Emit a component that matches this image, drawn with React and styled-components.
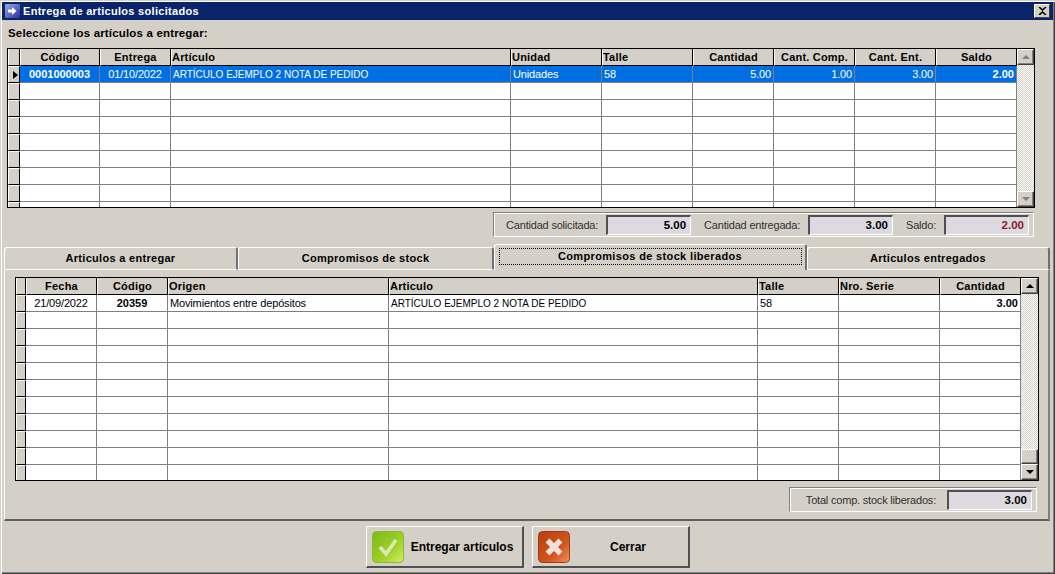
import React from "react";
import styled, { createGlobalStyle } from "styled-components";

const topCols = "12px 80px 71px 340px 91px 91px 81px 81px 81px 81px";
const bottomCols = "10px 71px 71px 221px 369px 81px 101px 81px";

const topHeaders = [
    { text: "Código" },
    { text: "Entrega" },
    { text: "Artículo", left: true },
    { text: "Unidad", left: true },
    { text: "Talle", left: true },
    { text: "Cantidad" },
    { text: "Cant. Comp." },
    { text: "Cant. Ent." },
    { text: "Saldo" },
];

const topRow = [
    { text: "0001000003", align: "center", bold: true },
    { text: "01/10/2022", align: "center" },
    { text: "ARTÍCULO EJEMPLO 2 NOTA DE PEDIDO", caps: true },
    { text: "Unidades" },
    { text: "58" },
    { text: "5.00", align: "right" },
    { text: "1.00", align: "right" },
    { text: "3.00", align: "right" },
    { text: "2.00", align: "right", bold: true },
];

const bottomHeaders = [
    { text: "Fecha" },
    { text: "Código" },
    { text: "Origen", left: true },
    { text: "Articulo", left: true },
    { text: "Talle", left: true },
    { text: "Nro. Serie", left: true },
    { text: "Cantidad" },
];

const bottomRow = [
    { text: "21/09/2022", align: "center" },
    { text: "20359", align: "center", bold: true },
    { text: "Movimientos entre depósitos" },
    { text: "ARTÍCULO EJEMPLO 2 NOTA DE PEDIDO", caps: true },
    { text: "58" },
    { text: "" },
    { text: "3.00", align: "right", bold: true },
];

const tabs = [
    { label: "Articulos a entregar", width: 234 },
    { label: "Compromisos de stock", width: 256 },
    { label: "Compromisos de stock liberados", width: 313, active: true },
    { label: "Articulos entregados", width: 243 },
];

function DataGrid({ cols, headers, firstRow, rowCount, selected, width, height, scrollDisabled }) {
    const blanks = Array.from({ length: rowCount - 1 });
    return (
        <GridFrame $width={width} $height={height}>
            <GridBody>
                <GridRow $cols={cols}>
                    <HeaderCell />
                    {headers.map((h) => (
                        <HeaderCell key={h.text} $left={h.left}>{h.text}</HeaderCell>
                    ))}
                </GridRow>
                <GridRow $cols={cols}>
                    <IndicatorCell>{selected && <RowPointer />}</IndicatorCell>
                    {firstRow.map((c, i) => (
                        <Cell key={i} $align={c.align} $bold={c.bold} $caps={c.caps} $selected={selected}>{c.text}</Cell>
                    ))}
                </GridRow>
                {blanks.map((_, i) => (
                    <GridRow $cols={cols} key={i}>
                        <IndicatorCell />
                        {firstRow.map((c, j) => <Cell key={j} />)}
                    </GridRow>
                ))}
            </GridBody>
            <ScrollBar>
                <ScrollButton><ArrowUp $disabled={scrollDisabled} /></ScrollButton>
                <ScrollTrack />
                {!scrollDisabled && <ScrollThumb />}
                <ScrollButton><ArrowDown $disabled={scrollDisabled} /></ScrollButton>
            </ScrollBar>
        </GridFrame>
    );
}

function App() {
    return (
        <Window>
            <GlobalStyle />
            <TitleBar>
                <TitleIcon viewBox="0 0 15 14">
                    <defs>
                        <linearGradient id="ti" x1="0" y1="0" x2="1" y2="1">
                            <stop offset="0" stopColor="#9aa8e8" />
                            <stop offset="1" stopColor="#2a2f9c" />
                        </linearGradient>
                    </defs>
                    <rect width="15" height="14" rx="1" fill="url(#ti)" />
                    <path d="M3 5.5h4V3l4.5 4L7 11V8.500H3z" fill="#fff" />
                </TitleIcon>
                <TitleText>Entrega de articulos solicitados</TitleText>
                <CloseButton>
                    <svg width="9" height="8" viewBox="0 0 9 8">
                        <path d="M1 0l3.500 3L8 0M1 8l3.500-3L8 8" fill="none" stroke="#000" strokeWidth="1.6" />
                    </svg>
                </CloseButton>
            </TitleBar>

            <TopSection>
                <SectionLabel>Seleccione los artículos a entregar:</SectionLabel>
                <DataGrid
                    cols={topCols}
                    headers={topHeaders}
                    firstRow={topRow}
                    rowCount={9}
                    width={1028}
                    height={160}
                    selected
                    scrollDisabled
                />
                <SummaryBox $width={541} $right={21} $top={4}>
                    <SummaryLabel $after={8}>Cantidad solicitada:</SummaryLabel>
                    <SummaryField>5.00</SummaryField>
                    <SummaryLabel $before={13} $after={8}>Cantidad entregada:</SummaryLabel>
                    <SummaryField>3.00</SummaryField>
                    <SummaryLabel $before={13} $after={8}>Saldo:</SummaryLabel>
                    <SummaryField $red>2.00</SummaryField>
                </SummaryBox>
            </TopSection>

            <TabStrip>
                {tabs.map((t) => (
                    <Tab key={t.label} $width={t.width} $active={t.active}>
                        {t.active ? <TabFocus>{t.label}</TabFocus> : t.label}
                    </Tab>
                ))}
            </TabStrip>

            <TabPanel>
                <DataGrid
                    cols={bottomCols}
                    headers={bottomHeaders}
                    firstRow={bottomRow}
                    rowCount={11}
                    width={1024}
                    height={204}
                />
                <SummaryBox $width={248} $right={11} $top={6}>
                    <SummaryLabel $after={11}>Total comp. stock liberados:</SummaryLabel>
                    <SummaryField>3.00</SummaryField>
                </SummaryBox>
            </TabPanel>

            <Footer>
                <ActionButton>
                    <ButtonIcon viewBox="0 0 32 32">
                        <defs>
                            <linearGradient id="ok" x1="0" y1="0" x2="1" y2="1">
                                <stop offset="0" stopColor="#7fb81a" />
                                <stop offset="0.55" stopColor="#9ad024" />
                                <stop offset="1" stopColor="#d4ec62" />
                            </linearGradient>
                        </defs>
                        <rect x="0.5" y="0.5" width="31" height="31" rx="4" fill="url(#ok)" stroke="#8ab83a" />
                        <path d="M8 16l6 7 10-14" fill="none" stroke="#dbe8bd" strokeWidth="3.500" />
                    </ButtonIcon>
                    <ButtonLabel>Entregar artículos</ButtonLabel>
                </ActionButton>
                <ActionButton>
                    <ButtonIcon viewBox="0 0 32 32">
                        <defs>
                            <linearGradient id="no" x1="0" y1="0" x2="1" y2="1">
                                <stop offset="0" stopColor="#b8400f" />
                                <stop offset="0.6" stopColor="#d0541c" />
                                <stop offset="1" stopColor="#f0905a" />
                            </linearGradient>
                        </defs>
                        <rect x="0.5" y="0.5" width="31" height="31" rx="4" fill="url(#no)" stroke="#a03c10" />
                        <path d="M9.500 9.500l13 13M22.500 9.500l-13 13" fill="none" stroke="#f0e2da" strokeWidth="5.500" />
                    </ButtonIcon>
                    <ButtonLabel>Cerrar</ButtonLabel>
                </ActionButton>
            </Footer>
        </Window>
    );
}

export default App;

const GlobalStyle = createGlobalStyle`
    html, body {
        margin: 0;
        padding: 0;
        overflow: hidden;
    }
    * {
        box-sizing: border-box;
    }
`;

const Window = styled.div`
    width: 1055px;
    height: 574px;
    padding-top: 2px;
    background-color: #d4d0c8;
    color: #000;
    font-family: "Liberation Sans", Arial, sans-serif;
    font-size: 11px;
    display: flex;
    flex-direction: column;
    overflow: hidden;
    box-shadow: inset 1px 1px 0 #d4d0c8, inset 2px 2px 0 #fff, inset -1px -1px 0 #404040, inset -2px -2px 0 #808080;
`;

const TitleBar = styled.div`
    height: 18px;
    margin: 0 2px;
    padding: 0 3px;
    background-color: #0a246a;
    display: flex;
    align-items: center;
    flex-shrink: 0;
`;

const TitleIcon = styled.svg`
    width: 15px;
    height: 14px;
    margin-right: 3px;
`;

const TitleText = styled.span`
    flex: 1;
    color: white;
    font-weight: bold;
    letter-spacing: 0.3px;
`;

const CloseButton = styled.div`
    width: 16px;
    height: 14px;
    background-color: #d4d0c8;
    display: flex;
    align-items: center;
    justify-content: center;
    border: 1px solid;
    border-color: #fff #404040 #404040 #fff;
`;

const TopSection = styled.div`
    padding-left: 7px;
    flex-shrink: 0;
    display: flex;
    flex-direction: column;
`;

const SectionLabel = styled.div`
    height: 28px;
    padding: 7px 0 0 1px;
    font-weight: bold;
    font-size: 11.500px;
    line-height: 13px;
    letter-spacing: 0.17px;
`;

const GridFrame = styled.div`
    width: ${(p) => p.$width}px;
    height: ${(p) => p.$height}px;
    flex-shrink: 0;
    border: 1px solid #000;
    background-color: white;
    display: flex;
    overflow: hidden;
`;

const GridBody = styled.div`
    flex: 1;
    overflow: hidden;
`;

const GridRow = styled.div`
    display: grid;
    grid-template-columns: ${(p) => p.$cols};
    height: 17px;
`;

const HeaderCell = styled.div`
    background-color: #d4d0c8;
    border-right: 1px solid #000;
    border-bottom: 1px solid #000;
    border-left: 1px solid #fff;
    font-weight: bold;
    line-height: 17px;
    text-align: ${(p) => (p.$left ? "left" : "center")};
    white-space: nowrap;
    overflow: hidden;
    letter-spacing: 0.2px;
`;

const IndicatorCell = styled.div`
    background-color: #d4d0c8;
    border-right: 1px solid #000;
    border-bottom: 1px solid #000;
    border-top: 1px solid #fff;
    border-left: 1px solid #fff;
    display: flex;
    align-items: center;
    justify-content: flex-end;
`;

const RowPointer = styled.span`
    width: 0;
    height: 0;
    margin-right: 1px;
    border-style: solid;
    border-width: 4px 0 4px 5px;
    border-color: transparent transparent transparent #000;
`;

const Cell = styled.div`
    padding: 0 2px;
    border-right: 1px solid #808080;
    border-bottom: 1px solid #808080;
    background-color: ${(p) => (p.$selected ? "#006fe3" : "#fff")};
    color: ${(p) => (p.$selected ? "#fff" : "#000")};
    font-weight: ${(p) => (p.$bold ? "bold" : "normal")};
    font-size: ${(p) => (p.$caps ? "10px" : "11px")};
    text-align: ${(p) => p.$align || "left"};
    letter-spacing: ${(p) => (p.$caps || p.$bold ? "0" : "-0.15px")};
    line-height: ${(p) => (p.$caps ? "18px" : "16px")};
    white-space: nowrap;
    overflow: hidden;
`;

const ScrollBar = styled.div`
    width: 17px;
    flex-shrink: 0;
    display: flex;
    flex-direction: column;
`;

const ScrollTrack = styled.div`
    flex: 1;
    background: repeating-conic-gradient(#d4d0c8 0 25%, #fff 0 50%) 0 0 / 2px 2px;
`;

const ScrollThumb = styled.div`
    height: 15px;
    flex-shrink: 0;
    background-color: #d4d0c8;
    border: 1px solid;
    border-color: #fff #404040 #404040 #fff;
    box-shadow: inset -1px -1px 0 #808080;
`;

const ScrollButton = styled.div`
    height: 16px;
    flex-shrink: 0;
    background-color: #d4d0c8;
    border: 1px solid;
    border-color: #fff #404040 #404040 #fff;
    box-shadow: inset -1px -1px 0 #808080;
    display: flex;
    align-items: center;
    justify-content: center;
`;

const ArrowUp = styled.span`
    width: 0;
    height: 0;
    border-style: solid;
    border-width: 0 4px 4px 4px;
    border-color: transparent transparent ${(p) => (p.$disabled ? "#808080" : "#000")} transparent;
`;

const ArrowDown = styled.span`
    width: 0;
    height: 0;
    border-style: solid;
    border-width: 4px 4px 0 4px;
    border-color: ${(p) => (p.$disabled ? "#808080" : "#000")} transparent transparent transparent;
`;

const SummaryBox = styled.div`
    align-self: flex-end;
    width: ${(p) => p.$width}px;
    height: 25px;
    margin: ${(p) => p.$top}px ${(p) => p.$right}px 0 auto;
    padding: 0 4px 0 0;
    display: flex;
    align-items: center;
    justify-content: flex-end;
    border: 1px solid;
    border-color: #808080 #fff #fff #808080;
    box-shadow: inset 1px 1px 0 #fff;
`;

const SummaryLabel = styled.span`
    margin-left: ${(p) => p.$before || 0}px;
    margin-right: ${(p) => p.$after || 0}px;
    color: #303030;
    letter-spacing: -0.2px;
    white-space: nowrap;
`;

const SummaryField = styled.div`
    width: 85px;
    height: 20px;
    flex-shrink: 0;
    padding-right: 4px;
    background-color: #dcdae0;
    border-style: solid;
    border-color: #505050 #fff #fff #505050;
    border-width: 2px 1px 1px 2px;
    color: ${(p) => (p.$red ? "#8b2020" : "#000")};
    font-weight: bold;
    font-size: 11.500px;
    line-height: 17px;
    text-align: right;
`;

const TabStrip = styled.div`
    height: 26px;
    margin: 7px 0 0 4px;
    display: flex;
    align-items: flex-end;
    flex-shrink: 0;
`;

const Tab = styled.div`
    width: ${(p) => p.$width}px;
    height: ${(p) => (p.$active ? "26px" : "23px")};
    padding: ${(p) => (p.$active ? "3px 0 0" : "0 0 2px")};
    display: flex;
    align-items: ${(p) => (p.$active ? "flex-start" : "center")};
    justify-content: center;
    font-weight: bold;
    letter-spacing: 0.3px;
    background-color: #d4d0c8;
    border-top: 1px solid #fff;
    border-left: 1px solid #fff;
    border-right: 2px solid #707070;
    border-bottom: ${(p) => (p.$active ? "none" : "1px solid #fff")};
    border-top-left-radius: 3px;
    border-top-right-radius: 3px;
`;

const TabFocus = styled.div`
    width: 303px;
    height: 17px;
    line-height: 15px;
    text-align: center;
    letter-spacing: 0.35px;
    border: 1px dotted #000;
`;

const TabPanel = styled.div`
    width: 1046px;
    height: 251px;
    margin-left: 4px;
    padding: 7px 0 0 10px;
    flex-shrink: 0;
    display: flex;
    flex-direction: column;
    border-left: 1px solid #fff;
    border-right: 2px solid #808080;
    border-bottom: 2px solid #606060;
`;

const Footer = styled.div`
    padding: 5px 0 0 1px;
    display: flex;
    justify-content: center;
    gap: 8px;
`;

const ActionButton = styled.div`
    width: 158px;
    height: 42px;
    padding-left: 5px;
    background-color: #d4d0c8;
    border-style: solid;
    border-width: 1px 2px 2px 1px;
    border-color: #fff #505050 #505050 #fff;
    display: flex;
    align-items: center;
`;

const ButtonIcon = styled.svg`
    width: 32px;
    height: 32px;
    flex-shrink: 0;
`;

const ButtonLabel = styled.span`
    flex: 1;
    padding-right: 2px;
    font-size: 12px;
    font-weight: bold;
    text-align: center;
    white-space: nowrap;
`;
